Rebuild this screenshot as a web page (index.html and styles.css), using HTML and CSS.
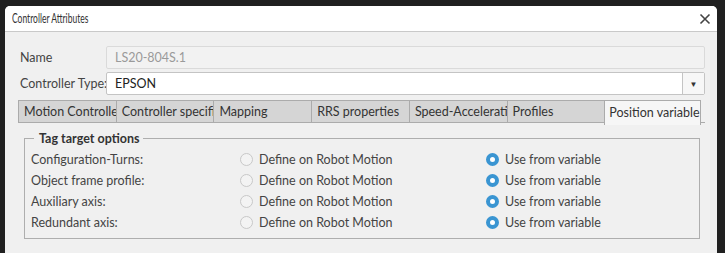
FILE: index.html
```html
<!DOCTYPE html>
<html lang="en">
<head>
    <meta charset="UTF-8">
    <title>Controller Attributes</title>
    <link rel="stylesheet" href="styles.css">
</head>
<body>
    <div class="window">
        <div class="titlebar">
            <span class="title">Controller Attributes</span>
            <span class="close">
                <svg width="12" height="12" viewBox="0 0 12 12"><path d="M1.5 1.5 L10.5 10.5 M10.5 1.5 L1.5 10.5" stroke="#444" stroke-width="1.6" fill="none"/></svg>
            </span>
        </div>
        <div class="content">
            <div class="form-row">
                <label class="form-label">Name</label>
                <div class="text-box disabled">LS20-804S.1</div>
            </div>
            <div class="form-row">
                <label class="form-label">Controller Type:</label>
                <div class="combo">
                    <span class="combo-value">EPSON</span>
                    <span class="combo-btn">&#9660;</span>
                </div>
            </div>

            <div class="tabs">
                <div class="tab">Motion Controller</div>
                <div class="tab">Controller specific</div>
                <div class="tab">Mapping</div>
                <div class="tab">RRS properties</div>
                <div class="tab">Speed-Acceleration</div>
                <div class="tab">Profiles</div>
                <div class="tab active">Position variable</div>
                <div class="tab-rest"></div>
            </div>

            <fieldset class="group">
                <legend>Tag target options</legend>
                <div class="opt-grid">
                    <span class="opt-label">Configuration-Turns:</span>
                    <span class="opt"><span class="radio"></span>Define on Robot Motion</span>
                    <span class="opt"><span class="radio checked"></span>Use from variable</span>

                    <span class="opt-label">Object frame profile:</span>
                    <span class="opt"><span class="radio"></span>Define on Robot Motion</span>
                    <span class="opt"><span class="radio checked"></span>Use from variable</span>

                    <span class="opt-label">Auxiliary axis:</span>
                    <span class="opt"><span class="radio"></span>Define on Robot Motion</span>
                    <span class="opt"><span class="radio checked"></span>Use from variable</span>

                    <span class="opt-label">Redundant axis:</span>
                    <span class="opt"><span class="radio"></span>Define on Robot Motion</span>
                    <span class="opt"><span class="radio checked"></span>Use from variable</span>
                </div>
            </fieldset>
        </div>
    </div>
</body>
</html>
```

FILE: styles.css
```css
/* General */
* {
    margin: 0;
    padding: 0;
    box-sizing: border-box;
}
html, body {
    background-color: #202020;
    font-family: Lato, "Noto Sans", sans-serif;
    font-size: 12.5px;
    color: #444;
    overflow: hidden;
}

.window {
    margin: 6px 8px 0 5px;
    height: 260px;
    background-color: #f0f0f0;
    border-radius: 5px 5px 0 0;
    overflow: hidden;
}

/* Title bar */
.titlebar {
    height: 26px;
    background-color: #fff;
    border-bottom: 1px solid #c9c9c9;
    display: flex;
    align-items: center;
    justify-content: space-between;
    padding: 0 6px 0 7px;
}
.title {
    color: #333;
    font-size: 12.5px;
    display: inline-block;
    white-space: nowrap;
    transform: scaleX(0.68);
    transform-origin: left center;
}
.close {
    display: flex;
    width: 12px;
    height: 12px;
}

/* Form */
.content {
    padding: 14px 12px 0 15px;
}
.form-row {
    display: flex;
    align-items: center;
    margin-bottom: 3px;
}
.form-label {
    width: 86px;
    white-space: nowrap;
    color: #444;
}
.text-box {
    flex: 1;
    height: 23px;
    border: 1px solid #dadada;
    border-radius: 2px;
    padding-left: 8px;
    display: flex;
    align-items: center;
}
.text-box.disabled {
    color: #9a9a9a;
    background-color: #f2f2f2;
}
.combo {
    flex: 1;
    height: 23px;
    display: flex;
    border: 1px solid #c4c4c4;
    border-radius: 2px;
    background-color: #fff;
}
.combo-value {
    flex: 1;
    color: #222;
    padding-left: 8px;
    display: flex;
    align-items: center;
}
.combo-btn {
    width: 22px;
    border-left: 1px solid #c4c4c4;
    background-color: #f7f7f7;
    color: #333;
    font-size: 8px;
    display: flex;
    align-items: center;
    justify-content: center;
}

/* Tabs */
.tabs {
    display: flex;
    align-items: flex-start;
    margin: 5px 0 0 -2px;
    height: 24px;
}
.tab {
    width: 98px;
    height: 23px;
    background-color: #d5d5d5;
    border: 1px solid #ababab;
    border-right: none;
    padding-left: 5px;
    color: #333;
    white-space: nowrap;
    overflow: hidden;
    text-overflow: clip;
    display: flex;
    align-items: center;
}
.tab.active {
    width: 97px;
    height: 25px;
    background-color: #f6f6f6;
    border: 1px solid #ababab;
    border-bottom: none;
    padding-left: 4px;
    padding-bottom: 2px;
}
.tab-rest {
    width: 4px;
    height: 1px;
    background-color: #ababab;
    margin-top: 22px;
}

/* Group box */
.group {
    margin: 7px 5px 0 4px;
    border: 1px solid #aeaeae;
    padding: 3px 6px 5px 6px;
}
.group legend {
    margin-left: 3px;
    padding: 0 4px 0 5px;
    font-weight: bold;
    color: #333;
}
.opt-grid {
    display: grid;
    grid-template-columns: 209px 246px 1fr;
    grid-auto-rows: 21px;
    align-items: center;
}
.opt-label {
    color: #444;
    white-space: nowrap;
}
.opt {
    display: flex;
    align-items: center;
    gap: 6px;
    color: #444;
    white-space: nowrap;
}
.radio {
    width: 13px;
    height: 13px;
    border-radius: 50%;
    border: 1px solid #c8c8c8;
    background-color: #f3f3f3;
}
.radio.checked {
    border: 4px solid #3a95d2;
    background-color: #fff;
}
```
